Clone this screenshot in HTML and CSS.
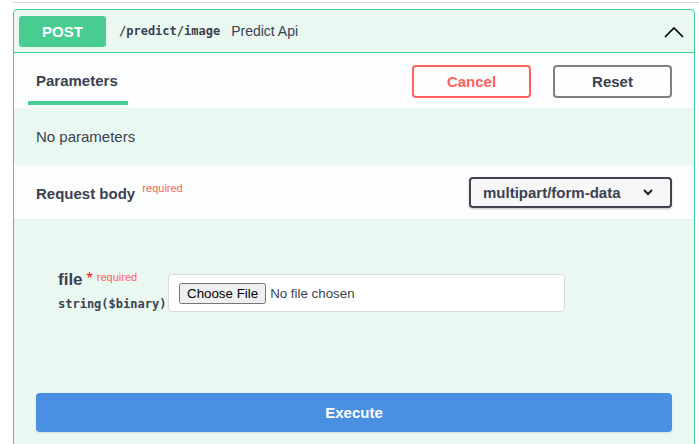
FILE: index.html
```html
<!DOCTYPE html>
<html>
<head>
<meta charset="utf-8">
<link rel="stylesheet" href="styles.css">
</head>
<body>
<div class="topline"></div>
<div class="opblock">
  <div class="summary">
    <span class="method">POST</span>
    <span class="path">/predict/image</span>
    <span class="desc">Predict Api</span>
    <svg class="arrow" width="20" height="12" viewBox="0 0 20 12"><polyline points="1,11 10,2 19,11" fill="none" stroke="#000" stroke-width="1.6"/></svg>
  </div>
  <div class="tabheader">
    <div class="tab">Parameters</div>
    <div class="actions">
      <button class="btn cancel">Cancel</button>
      <button class="btn reset">Reset</button>
    </div>
  </div>
  <div class="noparams">No parameters</div>
  <div class="rbheader">
    <div class="rblabel">Request body <sup class="req">required</sup></div>
    <div class="select">multipart/form-data
      <svg width="12" height="8" viewBox="0 0 12 8"><polyline points="2,2 6,6 10,2" fill="none" stroke="#222" stroke-width="2"/></svg>
    </div>
  </div>
  <div class="rbbody">
    <div class="param">
      <div class="pname">
        <div class="pline"><span class="fname">file</span><span class="star">*</span><span class="req2">required</span></div>
        <div class="ptype">string($binary)</div>
      </div>
      <div class="filebox"><input type="file" class="finput"></div>
    </div>
    <button class="execute">Execute</button>
  </div>
</div>
</body>
</html>
```

FILE: styles.css
```css
html, body {
  margin: 0;
  padding: 0;
  background: #fff;
  font-family: "Liberation Sans", Arial, sans-serif;
  color: #3b4151;
}
.topline {
  margin-left: 13px;
  margin-top: 2px;
  height: 1px;
  background: #d7d9de;
}
.opblock {
  margin: 6px 4px 0 13px;
  border: 1px solid #49cc90;
  border-radius: 4px;
  background: #eaf8f2;
  height: 460px;
}
.summary {
  display: flex;
  align-items: center;
  padding: 5px;
  height: 32px;
  border-bottom: 1px solid #49cc90;
}
.method {
  width: 87px;
  height: 31px;
  line-height: 31px;
  border-radius: 3px;
  background: #49cc90;
  color: #fff;
  text-align: center;
  font-weight: bold;
  font-size: 15px;
}
.path {
  margin-left: 13px;
  font-family: "DejaVu Sans Mono", monospace;
  font-weight: bold;
  font-size: 12px;
  color: #3b4151;
}
.desc {
  margin-left: 11px;
  font-size: 14px;
  color: #3b4151;
}
.arrow {
  margin-left: auto;
  margin-right: 5px;
  margin-top: 1px;
}
.tabheader {
  display: flex;
  align-items: center;
  justify-content: space-between;
  height: 55px;
  padding: 0 22px 0 14px;
  background: #fbfefd;
}
.tab {
  align-self: stretch;
  display: flex;
  align-items: center;
  padding: 0 8px;
  width: 84px;
  font-weight: bold;
  font-size: 15px;
  position: relative;
  color: #3b4151;
}
.tab::after {
  content: "";
  position: absolute;
  left: 0;
  right: 0;
  bottom: 3px;
  height: 4px;
  background: #49cc90;
}
.actions {
  display: flex;
  gap: 22px;
  margin-top: 1px;
}
.btn {
  width: 119px;
  height: 33px;
  border-radius: 4px;
  background: transparent;
  font-family: "Liberation Sans", Arial, sans-serif;
  font-weight: bold;
  font-size: 15px;
  cursor: pointer;
}
.cancel {
  border: 2px solid #ff6060;
  color: #ff6060;
}
.reset {
  border: 2px solid #808080;
  color: #3b4151;
}
.noparams {
  height: 57px;
  display: flex;
  align-items: center;
  padding-left: 22px;
  font-size: 15px;
  color: #3b4151;
}
.rbheader {
  display: flex;
  align-items: center;
  justify-content: space-between;
  height: 54px;
  padding: 0 22px;
  background: #fbfefd;
  border-bottom: 1px solid #e3efe9;
}
.rblabel {
  font-weight: bold;
  font-size: 15px;
}
.req {
  font-weight: normal;
  font-size: 11px;
  color: #ff6060;
  vertical-align: 7px;
  margin-left: 3px;
}
.select {
  width: 171px;
  height: 27px;
  border: 2px solid #41444e;
  border-radius: 4px;
  background: #f7f7f7;
  box-shadow: 0 1px 2px rgba(0,0,0,.25);
  display: flex;
  align-items: center;
  justify-content: space-between;
  padding: 0 16px 0 12px;
  font-weight: bold;
  font-size: 15px;
  color: #3b4151;
}
.rbbody {
  padding: 54px 22px 0 22px;
}
.param {
  display: flex;
  align-items: flex-start;
  padding-left: 22px;
}
.pname {
  width: 110px;
  margin-top: -4px;
}
.pline {
  display: flex;
  align-items: flex-start;
}
.fname {
  font-weight: bold;
  font-size: 17px;
  line-height: 20px;
}
.star {
  color: red;
  font-size: 16px;
  margin-left: 4px;
  line-height: 18px;
}
.req2 {
  color: #ff6060;
  font-size: 11px;
  margin-left: 4px;
  line-height: 14px;
}
.ptype {
  margin-top: 7px;
  font-family: "DejaVu Sans Mono", monospace;
  font-weight: bold;
  font-size: 12px;
  color: #3b4151;
}
.filebox {
  width: 385px;
  height: 36px;
  padding-left: 10px;
  background: #fff;
  border: 1px solid #d9d9d9;
  border-radius: 4px;
  display: flex;
  align-items: center;
}
.finput {
  font-family: "Liberation Sans", Arial, sans-serif;
  font-size: 13.33px;
  color: #3b4151;
}
.execute {
  display: block;
  margin-top: 81px;
  width: 100%;
  height: 39px;
  border: none;
  border-radius: 4px;
  background: #4990e2;
  color: #fff;
  font-family: "Liberation Sans", Arial, sans-serif;
  font-weight: bold;
  font-size: 15px;
  box-shadow: 0 1px 2px rgba(0,0,0,.1);
}
```
